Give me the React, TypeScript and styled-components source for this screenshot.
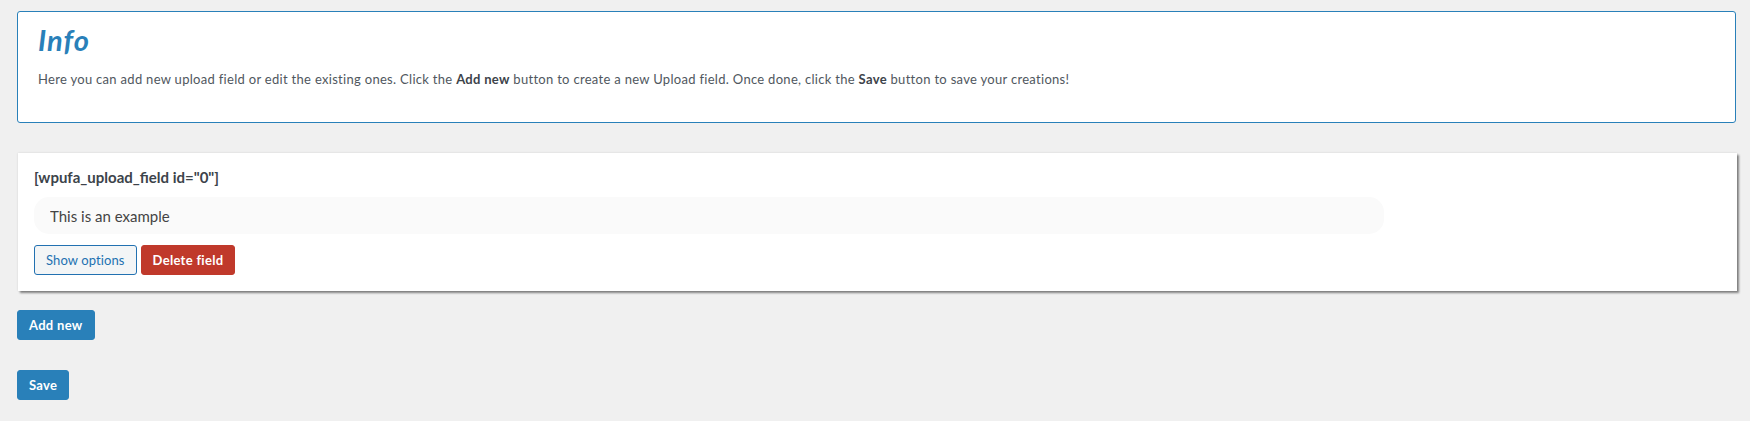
import React from "react";
import styled, { createGlobalStyle } from "styled-components";

const Global = createGlobalStyle`
  html, body { margin: 0; padding: 0; background: #f0f0f0; }
  body { font-family: Lato, "Noto Sans", "Liberation Sans", sans-serif; color: #3c434a; }
  * { box-sizing: border-box; }
`;

const Page = styled.div`
  padding: 11px 14px 20px 17px;
  display: flex;
  flex-direction: column;
  align-items: flex-start;
`;

const InfoBox = styled.section`
  align-self: stretch;
  background: #fff;
  border: 1px solid #2980b9;
  border-radius: 3px;
  padding: 12px 20px 33px 20px;
  margin-bottom: 30px;
`;

const InfoTitle = styled.h2`
  margin: 0 0 13px 0;
  font-size: 29px;
  line-height: 32px;
  font-weight: 700;
  font-style: italic;
  letter-spacing: 1px;
  color: #2980b9;
`;

const InfoText = styled.p`
  margin: 0;
  font-size: 13px;
  line-height: 20px;
  color: #50575e;
  letter-spacing: 0.3px;
  b { color: #3c434a; font-weight: 700; }
`;

const FieldCard = styled.div`
  align-self: stretch;
  margin: 0 -1px 19px 1px;
  background: #fff;
  padding: 14px 16px 16px 16px;
  box-shadow: 0 0 2px rgba(0, 0, 0, 0.12), 2px 2px 2px rgba(0, 0, 0, 0.45);
`;

const FieldCode = styled.div`
  font-size: 15px;
  line-height: 20px;
  font-weight: 700;
  color: #3c434a;
  margin-bottom: 10px;
`;

const FieldInput = styled.input`
  display: block;
  width: 80%;
  height: 37px;
  border: none;
  outline: none;
  background: #fafafa;
  border-radius: 15px;
  padding: 0 16px;
  font-family: inherit;
  font-size: 15px;
  font-weight: 400;
  letter-spacing: 0;
  color: #444;
  margin-bottom: 11px;
`;

const ButtonRow = styled.div`
  display: flex;
  gap: 4px;
`;

type Variant = "outline" | "danger" | "primary";

const Button = styled.button<{ $variant: Variant }>`
  height: 30px;
  padding: 0 11px;
  border-radius: 3px;
  font-family: inherit;
  font-size: 13px;
  cursor: pointer;
  border: 1px solid
    ${(p) => (p.$variant === "outline" ? "#2271b1" : p.$variant === "danger" ? "#c0392b" : "#2980b9")};
  background: ${(p) => (p.$variant === "outline" ? "#f3f5f6" : p.$variant === "danger" ? "#c0392b" : "#2980b9")};
  color: ${(p) => (p.$variant === "outline" ? "#2271b1" : "#fff")};
  font-weight: ${(p) => (p.$variant === "outline" ? 400 : 700)};
  letter-spacing: ${(p) => (p.$variant === "outline" ? "0.1px" : "0.3px")};
`;

const Spacer = styled.div`
  height: 30px;
`;

export default function App() {
  return (
    <>
      <Global />
      <Page>
        <InfoBox>
          <InfoTitle>Info</InfoTitle>
          <InfoText>
            Here you can add new upload field or edit the existing ones. Click the <b>Add new</b> button to create a new
            Upload field. Once done, click the <b>Save</b> button to save your creations!
          </InfoText>
        </InfoBox>
        <FieldCard>
          <FieldCode>[wpufa_upload_field id="0"]</FieldCode>
          <FieldInput defaultValue="This is an example" />
          <ButtonRow>
            <Button $variant="outline">Show options</Button>
            <Button $variant="danger">Delete field</Button>
          </ButtonRow>
        </FieldCard>
        <Button $variant="primary">Add new</Button>
        <Spacer />
        <Button $variant="primary">Save</Button>
      </Page>
    </>
  );
}
